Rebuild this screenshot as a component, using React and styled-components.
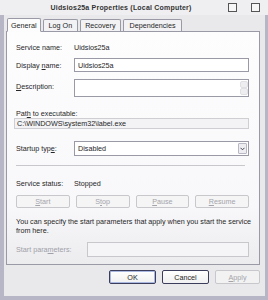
import React from 'react';
import styled, { createGlobalStyle } from 'styled-components';

const GlobalStyle = createGlobalStyle`
  html, body {
    margin: 0;
    padding: 0;
    background: #b4b4c4;
  }
  body {
    font-family: 'Liberation Sans', Arial, sans-serif;
    font-size: 7.2px;
    color: #262626;
  }
`;

const Window = styled.div`
  width: 268px;
  height: 300px;
  box-sizing: border-box;
  display: flex;
  flex-direction: column;
  background: #b6b6c6;
  padding: 0 3px 4px 4px;
`;

const TitleBar = styled.div`
  position: relative;
  height: 15px;
  display: flex;
  align-items: center;
  justify-content: center;
  background: #efeff2;
  margin: 0 -3px 0 -4px;
  padding-right: 26px;
  font-size: 7px;
  font-weight: bold;
  color: #333;
  letter-spacing: 0.2px;
`;

const TitleButtons = styled.div`
  position: absolute;
  right: 8px;
  top: 3px;
  display: flex;
  gap: 14px;
`;

const TitleBtn = styled.div`
  width: 9px;
  height: 9px;
  box-sizing: border-box;
  border: 1px solid #555;
  background: #f6f6f6;
`;

const Body = styled.div`
  flex: 1;
  display: flex;
  flex-direction: column;
  background: #e9e9ec;
  padding: 2px 5px 0 2px;
`;

const TabRow = styled.div`
  display: flex;
  align-items: flex-end;
  height: 14px;
  padding-left: 1px;
  position: relative;
  z-index: 1;
`;

const Tab = styled.div`
  height: ${p => (p.active ? '14px' : '12px')};
  box-sizing: border-box;
  padding: 0 ${p => p.px || 4}px;
  margin-right: 2px;
  display: flex;
  align-items: center;
  border: 1px solid #9a9aa6;
  border-bottom: ${p => (p.active ? '1px solid #fcfcfd' : 'none')};
  border-radius: 2px 2px 0 0;
  background: ${p => (p.active ? '#fcfcfd' : '#f2f2f4')};
  color: #262626;
  margin-bottom: ${p => (p.active ? '-1px' : '0')};
`;

const Panel = styled.div`
  height: 234px;
  box-sizing: border-box;
  border: 1px solid #9a9aa6;
  background: linear-gradient(180deg, #fdfdfe 0%, #f8f8fa 75%, #ececef 100%);
  padding: 8px 10px 0 9px;
  display: flex;
  flex-direction: column;
`;

const Row = styled.div`
  display: flex;
  align-items: ${p => (p.top ? 'flex-start' : 'center')};
  height: ${p => p.h || 14}px;
  margin-top: ${p => p.mt || 0}px;
  flex-shrink: 0;
`;

const Label = styled.div`
  width: ${p => p.w || 58}px;
  flex-shrink: 0;
  padding-top: ${p => p.pt || 0}px;
  color: ${p => (p.disabled ? '#a0a0a8' : '#262626')};
  white-space: nowrap;
`;

const Value = styled.div`
  color: #262626;
`;

const U = styled.span`
  text-decoration: underline;
`;

const Field = styled.div`
  flex: 1;
  height: ${p => p.h || 14}px;
  box-sizing: border-box;
  border: 1px solid ${p => (p.disabled ? '#c8c8cc' : '#9a9aa6')};
  background: ${p => p.bg || '#ffffff'};
  display: flex;
  align-items: ${p => (p.top ? 'stretch' : 'center')};
  padding-left: 3px;
  color: #262626;
`;

const ScrollCol = styled.div`
  margin-left: auto;
  width: 8px;
  display: flex;
  flex-direction: column;
  justify-content: space-between;
  padding: 1px 0;
`;

const ScrollArrow = styled.div`
  height: 7px;
  border-radius: 2px;
  background: #eeeef0;
  border: 1px solid #e0e0e4;
  box-sizing: border-box;
`;

const Static = styled.div`
  height: 11px;
  flex-shrink: 0;
  box-sizing: border-box;
  border: 1px solid #cfcfd3;
  background: #f3f3f5;
  display: flex;
  align-items: center;
  padding-left: 2px;
  margin-left: -2px;
`;

const DropBtn = styled.div`
  margin-left: auto;
  width: 9px;
  height: 11px;
  margin-right: 1px;
  box-sizing: border-box;
  border: 1px solid #b8b8c4;
  border-radius: 1px;
  background: #eeeef2;
  display: flex;
  align-items: center;
  justify-content: center;
`;

const Separator = styled.div`
  height: 1px;
  flex-shrink: 0;
  background: #c8c8cc;
  margin: 9px 4px 0 0;
`;

const BtnRow = styled.div`
  display: flex;
  gap: 6px;
  margin-top: 7px;
`;

const PanelBtn = styled.div`
  width: 54px;
  height: 13px;
  box-sizing: border-box;
  border: 1px solid #c8c8cc;
  border-radius: 2px;
  background: #f5f5f6;
  color: #a4a4aa;
  display: flex;
  align-items: center;
  justify-content: center;
`;

const Note = styled.div`
  margin: 9px -8px 0 0;
  line-height: 9px;
  color: #262626;
`;

const Footer = styled.div`
  display: flex;
  justify-content: flex-end;
  gap: 6px;
  padding: 5px 0 0 0;
`;

const DlgBtn = styled.div`
  width: ${p => p.w || 47}px;
  height: 14px;
  box-sizing: border-box;
  border: 1px solid ${p => (p.disabled ? '#c8c8cc' : '#3c3c5c')};
  border-radius: 2px;
  background: ${p => (p.disabled ? '#f2f2f3' : 'linear-gradient(180deg, #ffffff 0%, #f0f0f2 100%)')};
  box-shadow: ${p => (p.primary ? 'inset 0 0 0 1px #a8b8e0' : 'none')};
  color: ${p => (p.disabled ? '#a4a4aa' : '#262626')};
  display: flex;
  align-items: center;
  justify-content: center;
`;

const Chevron = () => (
  <svg width="5" height="4" viewBox="0 0 5 4">
    <path d="M0.5 0.8 L2.5 2.8 L4.5 0.8" fill="none" stroke="#445" strokeWidth="1" />
  </svg>
);

export default function App() {
  return (
    <>
      <GlobalStyle />
      <Window>
        <TitleBar>
          Uidsios25a Properties (Local Computer)
          <TitleButtons>
            <TitleBtn />
            <TitleBtn />
          </TitleButtons>
        </TitleBar>
        <Body>
          <TabRow>
            <Tab active px={3}>General</Tab>
            <Tab px={5}>Log On</Tab>
            <Tab px={4}>Recovery</Tab>
            <Tab px={6}>Dependencies</Tab>
          </TabRow>
          <Panel>
            <Row>
              <Label>Service name:</Label>
              <Value>Uidsios25a</Value>
            </Row>
            <Row mt={4}>
              <Label>Display <U>n</U>ame:</Label>
              <Field>Uidsios25a</Field>
            </Row>
            <Row mt={7} h={18} top>
              <Label pt={3}><U>D</U>escription:</Label>
              <Field h={18} top>
                <ScrollCol>
                  <ScrollArrow />
                  <ScrollArrow />
                </ScrollCol>
              </Field>
            </Row>
            <Row mt={12} h={9}>
              <Label>Pat<U>h</U> to executable:</Label>
            </Row>
            <Static>C:\WINDOWS\system32\label.exe</Static>
            <Row mt={12} h={15}>
              <Label>Startup typ<U>e</U>:</Label>
              <Field h={15}>
                Disabled
                <DropBtn>
                  <Chevron />
                </DropBtn>
              </Field>
            </Row>
            <Separator />
            <Row mt={12} h={10}>
              <Label>Service status:</Label>
              <Value>Stopped</Value>
            </Row>
            <BtnRow>
              <PanelBtn><span><U>S</U>tart</span></PanelBtn>
              <PanelBtn><span>S<U>t</U>op</span></PanelBtn>
              <PanelBtn><span><U>P</U>ause</span></PanelBtn>
              <PanelBtn><span><U>R</U>esume</span></PanelBtn>
            </BtnRow>
            <Note>
              You can specify the start parameters that apply when you start the service from here.
            </Note>
            <Row mt={7} h={15}>
              <Label w={71} disabled>Start para<U>m</U>eters:</Label>
              <Field h={15} disabled bg="#f5f5f7" />
            </Row>
          </Panel>
          <Footer>
            <DlgBtn primary>OK</DlgBtn>
            <DlgBtn>Cancel</DlgBtn>
            <DlgBtn disabled w={45}><span><U>A</U>pply</span></DlgBtn>
          </Footer>
        </Body>
      </Window>
    </>
  );
}
